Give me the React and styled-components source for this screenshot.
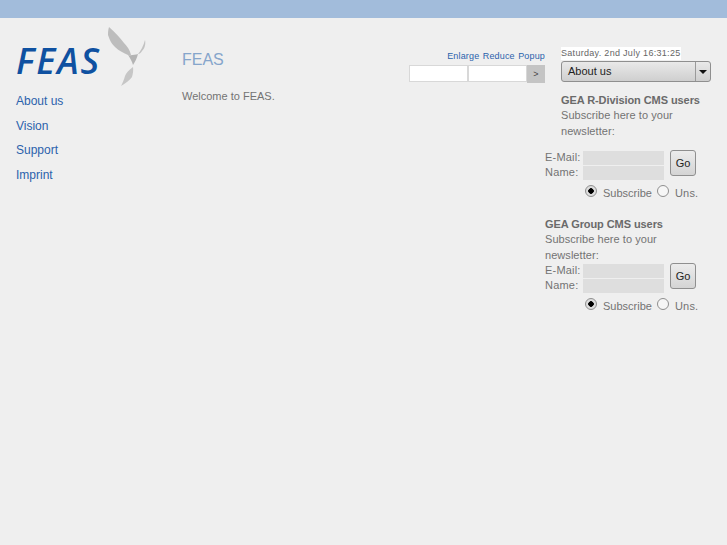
import React from 'react';
import styled, { createGlobalStyle } from 'styled-components';

const Global = createGlobalStyle`
  html, body {
    background: #efefef;
    margin: 0;
    padding: 0;
  }
  body {
    color: #737373;
    font-family: "Liberation Sans", Arial, sans-serif;
    font-size: 12px;
  }
`;

const TopBar = styled.div`
  background: #a2bcdb;
  height: 18px;
`;

const Page = styled.div`
  display: flex;
  height: 527px;
  overflow: hidden;
`;

const Sidebar = styled.div`
  flex: none;
  padding: 9px 0 0 16px;
  width: 166px;
`;

const Logo = styled.div`
  align-items: flex-start;
  display: flex;
  height: 60px;
`;

const LogoText = styled.span`
  color: #0f51a1;
  font-family: "Open Sans", sans-serif;
  font-size: 36px;
  font-style: italic;
  font-weight: 600;
  letter-spacing: 2px;
  line-height: 50px;
  margin-top: 9px;
  width: 91px;
`;

const BirdSvg = styled.svg`
  flex: none;
  height: 60px;
  width: 40px;
`;

const Nav = styled.nav`
  display: flex;
  flex-direction: column;
  margin-top: 2px;
`;

const NavLink = styled.a`
  color: #2b62ac;
  font-size: 12px;
  line-height: 24.5px;
`;

const Main = styled.div`
  display: flex;
  flex: none;
  justify-content: space-between;
  width: 363px;
`;

const Content = styled.div`
  padding-top: 32px;
`;

const Title = styled.h1`
  color: #86a5cb;
  font-size: 16px;
  font-weight: 400;
  line-height: 20px;
  margin: 0 0 19px;
`;

const Welcome = styled.p`
  font-size: 11px;
  line-height: 14px;
  margin: 0;
`;

const Search = styled.div`
  display: flex;
  flex-direction: column;
  align-items: flex-end;
  padding-top: 32px;
`;

const Tools = styled.div`
  display: flex;
  gap: 3.5px;
  height: 13px;
  line-height: 13px;
`;

const ToolLink = styled.a`
  color: #2b62ac;
  font-size: 9px;
  letter-spacing: 0.15px;
`;

const SearchRow = styled.div`
  display: flex;
  margin-top: 2px;
`;

const SearchField = styled.input`
  background: #fff;
  border: 1px solid #d8d8d8;
  box-sizing: border-box;
  height: 17px;
  margin: 0;
  padding: 0;
  width: 59px;
`;

const SearchButton = styled.button`
  background: #c4c4c4;
  border: 0;
  color: #444;
  font-family: inherit;
  font-size: 9px;
  height: 18px;
  margin: 0;
  padding: 0;
  width: 18px;
`;

const Right = styled.div`
  flex: none;
  padding: 29px 0 0 16px;
  width: 150px;
`;

const DateLine = styled.div`
  background: #fff;
  color: #666;
  display: inline-block;
  font-size: 9px;
  letter-spacing: 0.3px;
  line-height: 13px;
  vertical-align: top;
  width: 120px;
  white-space: nowrap;
`;

const Select = styled.div`
  background: linear-gradient(#e9e9e9, #cfcfcf);
  border: 1px solid #8f8f8f;
  border-radius: 3px;
  box-sizing: border-box;
  color: #222;
  display: flex;
  font-size: 11px;
  height: 21px;
  line-height: 19px;
  width: 150px;
`;

const SelectValue = styled.span`
  flex: 1;
  padding-left: 6px;
`;

const SelectArrow = styled.span`
  align-items: center;
  border-left: 1px solid #9a9a9a;
  display: flex;
  justify-content: center;
  width: 14px;

  &::after {
    border-left: 4px solid transparent;
    border-right: 4px solid transparent;
    border-top: 4px solid #111;
    content: "";
  }
`;

const Heading = styled.div`
  color: #6a6a6a;
  font-size: 11px;
  font-weight: 700;
  letter-spacing: -0.08px;
  line-height: 15px;
  white-space: nowrap;
`;

const Blurb = styled.div`
  font-size: 11px;
  letter-spacing: 0.05px;
  line-height: 15.5px;
`;

const Block = styled.section`
  margin-top: ${p => p.$top}px;
`;

const FormRow = styled.div`
  display: flex;
  margin-top: ${p => p.$top}px;
`;

const Labels = styled.div`
  font-size: 11px;
  letter-spacing: 0.2px;
  line-height: 15px;
  width: 38px;
`;

const Fields = styled.div`
  display: flex;
  flex-direction: column;
  gap: 1px;
  padding-top: 1px;
`;

const Field = styled.div`
  background: #dedede;
  height: 14px;
  width: 81px;
`;

const GoButton = styled.button`
  background: linear-gradient(#ececec, #d4d4d4);
  border: 1px solid #8f8f8f;
  border-radius: 3px;
  color: #222;
  font-family: inherit;
  font-size: 11px;
  height: 26px;
  margin: 0 0 0 6px;
  padding: 0;
  width: 26px;
`;

const RadioRow = styled.div`
  align-items: center;
  display: flex;
  font-size: 11px;
  height: 16px;
  margin-left: 40px;
  margin-top: 5px;
`;

const Radio = styled.span`
  background: ${p => (p.$on ? 'radial-gradient(circle, #000 0 2.5px, #ddd 3px)' : '#f6f6f6')};
  border: 1px solid #8f8f8f;
  border-radius: 50%;
  box-sizing: border-box;
  display: inline-block;
  height: 12px;
  margin-top: -4px;
  margin-right: 6px;
  width: 12px;
`;

const RadioLabel = styled.span`
  margin-right: 5px;
  letter-spacing: ${p => p.$spacing}px;
`;

const Bird = () => (
  <BirdSvg viewBox="0 0 40 60">
    <path d="M2 0 C1 3 1 6 1 8 C3 14 5 17 8 20 C12 24 17 26 21 28 L24 28 C23 23 20 19 17 16 C13 11 8 5 2 0 Z" fill="#bdbdbd" />
    <path d="M21 28 C24 28.5 28 28 31 27 C30 31 28 35 26 38 C25 34 23 31 21 28 Z" fill="#b4b4b4" />
    <path d="M31 27 C33.5 24 36.5 19 38 13 C39 17 37.5 22 35 24 C34 26 32.5 27 31 27 Z" fill="#c2c2c2" />
    <path d="M26 40 C22 43 19 46 18 49 C17 53 15 57 14 59 C19 56 23 53 25 50 C26 47 26.5 43 26 40 Z" fill="#c6c6c6" />
  </BirdSvg>
);

const Newsletter = ({ top, children, formTop }) => (
  <Block $top={top}>
    {children}
    <FormRow $top={formTop}>
      <Labels>E-Mail:<br />Name:</Labels>
      <Fields>
        <Field />
        <Field />
      </Fields>
      <GoButton>Go</GoButton>
    </FormRow>
    <RadioRow>
      <Radio $on />
      <RadioLabel $spacing={0}>Subscribe</RadioLabel>
      <Radio />
      <RadioLabel $spacing={0.2}>Uns.</RadioLabel>
    </RadioRow>
  </Block>
);

const NewsColumn = styled.div`
  margin-left: -16px;
`;

const App = () => (
  <>
    <Global />
    <TopBar />
    <Page>
      <Sidebar>
        <Logo>
          <LogoText>FEAS</LogoText>
          <Bird />
        </Logo>
        <Nav>
          <NavLink>About us</NavLink>
          <NavLink>Vision</NavLink>
          <NavLink>Support</NavLink>
          <NavLink>Imprint</NavLink>
        </Nav>
      </Sidebar>
      <Main>
        <Content>
          <Title>FEAS</Title>
          <Welcome>Welcome to FEAS.</Welcome>
        </Content>
        <Search>
          <Tools>
            <ToolLink>Enlarge</ToolLink>
            <ToolLink>Reduce</ToolLink>
            <ToolLink>Popup</ToolLink>
          </Tools>
          <SearchRow>
            <SearchField />
            <SearchField />
            <SearchButton>&gt;</SearchButton>
          </SearchRow>
        </Search>
      </Main>
      <Right>
        <DateLine>Saturday. 2nd July 16:31:25</DateLine>
        <Select>
          <SelectValue>About us</SelectValue>
          <SelectArrow />
        </Select>
        <Block $top={11}>
          <Heading>GEA R-Division CMS users</Heading>
          <Blurb>Subscribe here to your<br />newsletter:</Blurb>
        </Block>
        <NewsColumn>
          <Newsletter top={0} formTop={11} />
          <Newsletter top={16} formTop={0}>
            <Heading>GEA Group CMS users</Heading>
            <Blurb>Subscribe here to your<br />newsletter:</Blurb>
          </Newsletter>
        </NewsColumn>
      </Right>
    </Page>
  </>
);

export default App;
